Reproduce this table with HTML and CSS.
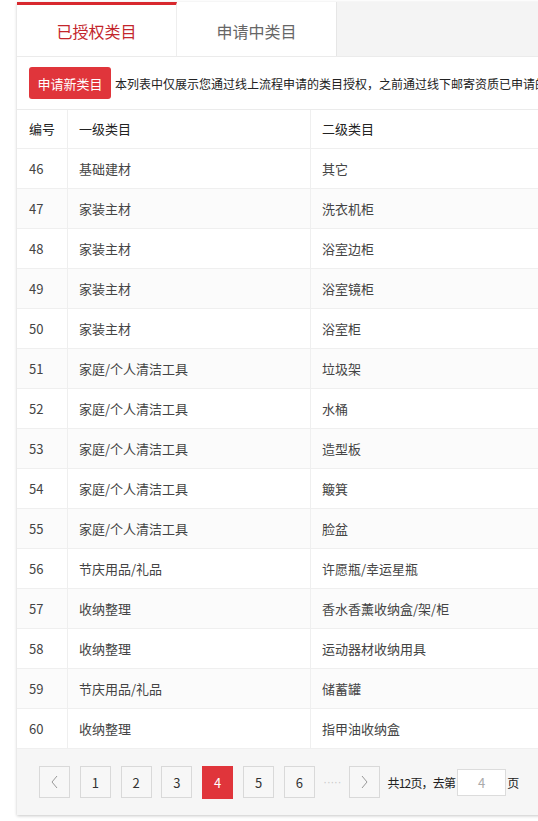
FILE: index.html
```html
<!DOCTYPE html>
<html lang="zh-CN">
<head>
<meta charset="utf-8">
<title>类目管理</title>
<link rel="stylesheet" href="styles.css">
</head>
<body>
<div class="wrap">
  <div class="tabs">
    <div class="tab active">已授权类目</div>
    <div class="tab">申请中类目</div>
  </div>
  <div class="toolbar">
    <button class="btn-apply">申请新类目</button>
    <span class="tip">本列表中仅展示您通过线上流程申请的类目授权，之前通过线下邮寄资质已申请的类目不在此列表中展示</span>
  </div>
  <table class="grid">
    <thead>
      <tr><th class="c1">编号</th><th class="c2">一级类目</th><th class="c3">二级类目</th></tr>
    </thead>
    <tbody>
      <tr><td>46</td><td>基础建材</td><td>其它</td></tr>
      <tr><td>47</td><td>家装主材</td><td>洗衣机柜</td></tr>
      <tr><td>48</td><td>家装主材</td><td>浴室边柜</td></tr>
      <tr><td>49</td><td>家装主材</td><td>浴室镜柜</td></tr>
      <tr><td>50</td><td>家装主材</td><td>浴室柜</td></tr>
      <tr><td>51</td><td>家庭/个人清洁工具</td><td>垃圾架</td></tr>
      <tr><td>52</td><td>家庭/个人清洁工具</td><td>水桶</td></tr>
      <tr><td>53</td><td>家庭/个人清洁工具</td><td>造型板</td></tr>
      <tr><td>54</td><td>家庭/个人清洁工具</td><td>簸箕</td></tr>
      <tr><td>55</td><td>家庭/个人清洁工具</td><td>脸盆</td></tr>
      <tr><td>56</td><td>节庆用品/礼品</td><td>许愿瓶/幸运星瓶</td></tr>
      <tr><td>57</td><td>收纳整理</td><td>香水香薰收纳盒/架/柜</td></tr>
      <tr><td>58</td><td>收纳整理</td><td>运动器材收纳用具</td></tr>
      <tr><td>59</td><td>节庆用品/礼品</td><td>储蓄罐</td></tr>
      <tr><td>60</td><td>收纳整理</td><td>指甲油收纳盒</td></tr>
    </tbody>
  </table>
  <div class="pager">
    <a class="pg arrow"><svg width="9" height="14" viewBox="0 0 9 14"><path d="M7 1 L2 7 L7 13" fill="none" stroke="#999" stroke-width="1"/></svg></a>
    <a class="pg">1</a>
    <a class="pg">2</a>
    <a class="pg">3</a>
    <a class="pg cur">4</a>
    <a class="pg">5</a>
    <a class="pg">6</a>
    <span class="dots">·····</span>
    <a class="pg arrow next"><svg width="9" height="14" viewBox="0 0 9 14"><path d="M2 1 L7 7 L2 13" fill="none" stroke="#999" stroke-width="1"/></svg></a>
    <span class="total">共12页，去第</span>
    <input class="goto" type="text" value="4">
    <span class="unit">页</span>
  </div>
</div>
</body>
</html>
```

FILE: styles.css
```css
html, body {
  margin: 0;
  padding: 0;
  background: #fff;
  overflow: hidden;
}
body {
  font-family: "Noto Sans CJK SC", "Open Sans", sans-serif;
  color: #333;
  width: 538px;
  height: 821px;
}
.wrap {
  margin: 2px 0 0 17px;
  width: 760px;
  background: #fff;
  box-shadow: 0 1px 3px rgba(0, 0, 0, 0.22);
}
.tabs {
  display: flex;
  height: 54px;
  background: #f4f4f4;
  border-bottom: 1px solid #ebebeb;
}
.tab {
  width: 160px;
  display: flex;
  align-items: center;
  justify-content: center;
  background: #fff;
  color: #666;
  font-size: 16px;
  box-sizing: border-box;
  border-right: 1px solid #e6e6e6;
  padding-top: 3px;
}
.tab.active {
  border-top: 3px solid #d8282e;
  padding-top: 0;
  color: #c3262c;
  border-right: 1px solid #eee;
}
.toolbar {
  display: flex;
  align-items: center;
  gap: 4px;
  height: 52px;
  padding-left: 12px;
  border-bottom: 1px solid #ebebeb;
  white-space: nowrap;
  overflow: hidden;
}
.btn-apply {
  flex: none;
  width: 82px;
  height: 32px;
  border: none;
  border-radius: 3px;
  background: #e0353b;
  color: #fff;
  font-family: inherit;
  font-size: 13px;
  padding: 0;
}
.tip {
  font-size: 12px;
  color: #222;
}
.grid {
  width: 100%;
  border-collapse: collapse;
  table-layout: fixed;
  font-size: 13px;
}
.grid th, .grid td {
  height: 39px;
  padding: 0 0 0 11px;
  text-align: left;
  font-weight: normal;
  border-bottom: 1px solid #efefef;
  border-right: 1px solid #efefef;
  line-height: 18px;
}
.grid th {
  height: 38px;
  color: #222;
}
.grid td {
  color: #444;
}
.grid th.c1 { width: 38px; padding-left: 12px; }
.grid td:first-child { padding-left: 12px; }
.grid th.c2 { width: 231px; }
.grid tbody tr:nth-child(even) td {
  background: #fbfbfb;
}
.pager {
  display: flex;
  align-items: center;
  height: 66px;
  padding-left: 22px;
  background: #f6f6f6;
  box-sizing: border-box;
}
.pg {
  flex: none;
  width: 31px;
  height: 32px;
  box-sizing: border-box;
  border: 1px solid #d9d9d9;
  background: #f7f7f7;
  display: flex;
  align-items: center;
  justify-content: center;
  font-size: 13px;
  color: #333;
  margin-right: 9.8px;
}
.pg.cur {
  background: #e0353b;
  border-color: #e0353b;
  color: #fff;
  height: 33px;
}
.dots {
  flex: none;
  color: #c8c8c8;
  font-family: "DejaVu Sans", sans-serif;
  font-size: 10px;
  letter-spacing: 0.4px;
  margin-right: 8px;
  margin-left: -1px;
}
.pg.next { margin-right: 7px; }
.total {
  font-size: 12px;
  color: #222;
  letter-spacing: -0.8px;
  white-space: nowrap;
}
.goto {
  flex: none;
  width: 49px;
  height: 27px;
  box-sizing: border-box;
  border: 1px solid #dcdcdc;
  background: #fff;
  color: #aaa;
  text-align: center;
  font-family: inherit;
  font-size: 13px;
  margin: 0 1px 0 2px;
  padding: 0;
}
.unit {
  font-size: 12px;
  color: #222;
}
```
